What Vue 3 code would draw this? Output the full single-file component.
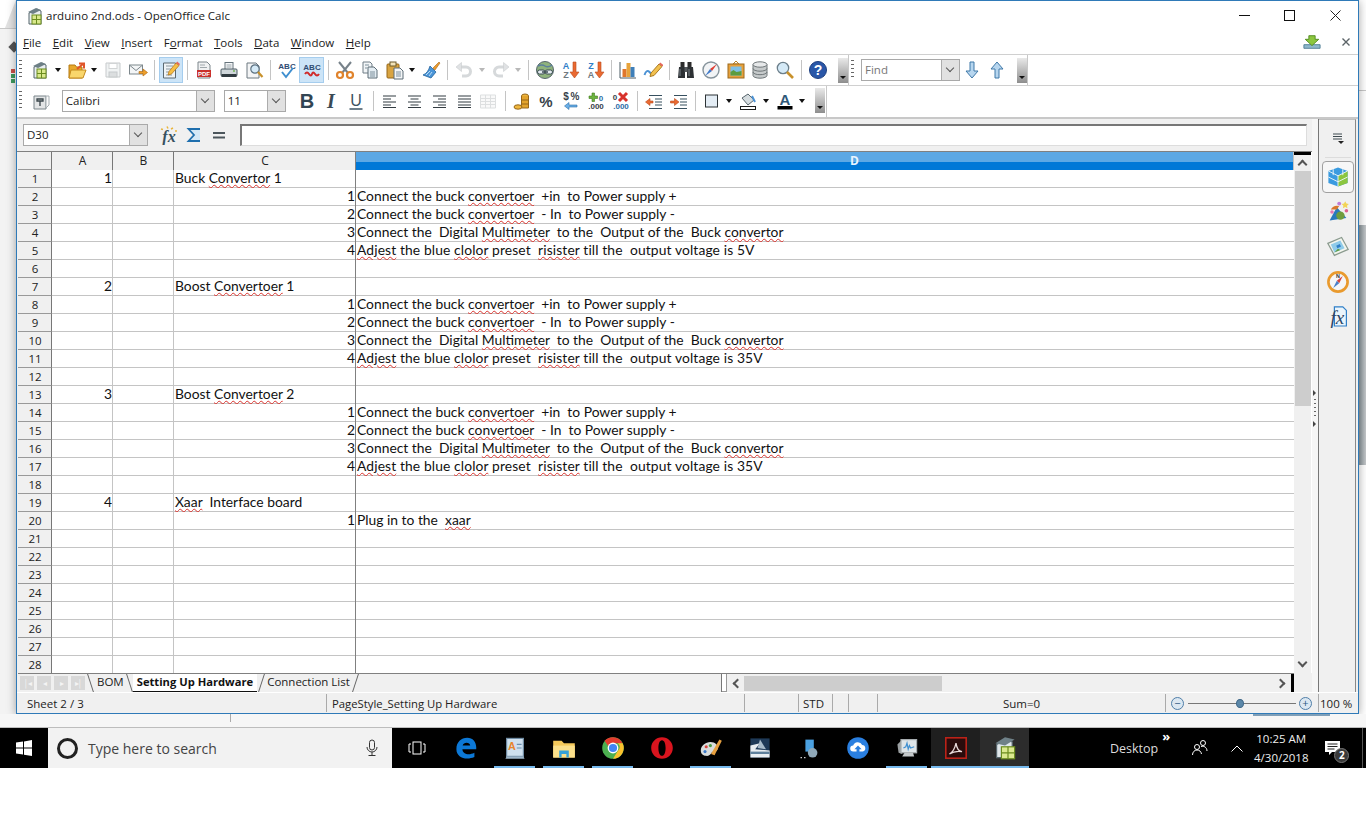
<script setup>
import { computed } from 'vue'

// all toolbar and taskbar pictures, drawn on a 20x20 box
const icons = {
  calc: '<path d="M4 7 12 3l4 2v13H4z" fill="#e9eef0" stroke="#55656b"/><path d="M3 6 11 2l5 2-8 4z" fill="#6d7f86"/><rect x="7" y="9" width="9" height="9" fill="#d9e88c" stroke="#6b8c1e"/><path d="M11.5 9v9M7 13.5h9" stroke="#6b8c1e"/>',
  open: '<path d="M2 5h6l1.500 2H15v11H2z" fill="#e8a92c" stroke="#b57a12"/><path d="M4 10h15l-3 8H2z" fill="#f9d66c" stroke="#c4891c"/><path d="M10 9l6-5M12 3.500h5v5" fill="none" stroke="#e0552a" stroke-width="2"/>',
  save: '<path d="M3 3h14v14H3z" fill="#eceff0" stroke="#b4b9bb"/><rect x="6" y="3.500" width="8" height="5" fill="#fff" stroke="#c2c6c8"/><rect x="6" y="12" width="8" height="5" fill="#cfd3d5" stroke="#b4b9bb"/>',
  mail: '<rect x="1.500" y="5" width="13" height="9" fill="#f4f6f7" stroke="#7d878c"/><path d="M2 5.500l6 5 6-5" fill="none" stroke="#7d878c"/><path d="M11 11.500h4V9l4.500 3.500L15 16v-2.500h-4z" fill="#eda02c" stroke="#b8711a" stroke-width=".7"/>',
  edit: '<path d="M2.500 3h12v15h-12z" fill="#eef3f6" stroke="#5c6a72"/><path d="M5 6h7M5 9h5M5 12h4M5 15h6" stroke="#8b98a0"/><path d="M7 15l1-3.500L15 3l3 2.500-7.500 8.500z" fill="#f6bf45" stroke="#b7791c" stroke-width=".8"/><path d="M15 3l1.200-1.400 2.800 2.400L18 5.500z" fill="#e4685c"/>',
  pdf: '<path d="M4 2h9l3 3v13H4z" fill="#f0f1f2" stroke="#7c868b"/><path d="M6 5h5M6 7.500h7" stroke="#a0a8ac"/><rect x="3" y="10" width="14" height="7" fill="#c9302c"/><text x="10" y="16" font-family="Liberation Sans" font-size="6" font-weight="700" text-anchor="middle" fill="#fff">PDF</text>',
  print: '<rect x="6" y="2.500" width="8" height="7" fill="#f7f8f9" stroke="#66747c"/><path d="M7.500 5h5M7.500 7h5" stroke="#99a5ab"/><rect x="2" y="9" width="16" height="7" rx="1" fill="#cfd6da" stroke="#4b5a62"/><rect x="2.500" y="14" width="15" height="3" fill="#303a40"/><circle cx="15" cy="11" r=".9" fill="#6bb04a"/>',
  preview: '<path d="M3 3h9l3 3v12H3z" fill="#f4f5f6" stroke="#6c7880"/><circle cx="11" cy="9" r="4.200" fill="#d5eaf7" stroke="#5c7180" stroke-width="1.200"/><path d="M14 12l4.500 5" stroke="#c8912b" stroke-width="2.200"/>',
  spell: '<text x="10" y="9" font-family="Liberation Sans" font-size="8" font-weight="700" text-anchor="middle" fill="#2f4c72">ABC</text><path d="M5 12l4 5 7-9" fill="none" stroke="#3f8fd0" stroke-width="2"/>',
  autospell: '<text x="10" y="10" font-family="Liberation Sans" font-size="8" font-weight="700" text-anchor="middle" fill="#2f4c72">ABC</text><path d="M3 14q2-3 4 0t3 0 3 0 4 0" fill="none" stroke="#d02b2b" stroke-width="2"/>',
  cut: '<path d="M4 2l9 11M16 2L7 13" stroke="#77828a" stroke-width="2"/><circle cx="5" cy="15" r="3" fill="none" stroke="#e0832c" stroke-width="2.200"/><circle cx="15" cy="15" r="3" fill="none" stroke="#e0832c" stroke-width="2.200"/>',
  copy: '<path d="M3 2h7l2 2v9H3z" fill="#f2f5f7" stroke="#6f7d86"/><path d="M8 7h6l3 3v8H8z" fill="#e4edf3" stroke="#5c6c76"/><path d="M5 5h4M5 8h2M10 12h5M10 14h5M10 16h5" stroke="#7d8f9b"/>',
  paste: '<rect x="2" y="4" width="12" height="14" rx="1" fill="#d9a441" stroke="#96671b"/><rect x="5" y="2" width="6" height="4" fill="#f3e3b8" stroke="#6c5a2b"/><path d="M9 8h6l3 3v8H9z" fill="#f4f6f7" stroke="#5c6c76"/><path d="M11 12h5M11 14h5M11 16h5" stroke="#7d8f9b"/>',
  brush: '<path d="M12 8l6-6 1 1-5 7z" fill="#e99b2f" stroke="#a9681a" stroke-width=".6"/><path d="M9 6l6 6-5 6-8-3q5-2 7-9z" fill="#4a95d8" stroke="#24639c" stroke-width=".8"/><path d="M5 15l4-4M8 16l3-4" stroke="#bcdcf5"/>',
  undo: '<path d="M6 7h6a4.500 4.500 0 0 1 0 9H8" fill="none" stroke="#c9cdcf" stroke-width="3"/><path d="M7.500 2.500v9L2 7z" fill="#d6d9db" stroke="#b8bcbf" stroke-width=".6"/>',
  redo: '<path d="M14 7H8a4.500 4.500 0 0 0 0 9h4" fill="none" stroke="#c9cdcf" stroke-width="3"/><path d="M12.500 2.500v9L18 7z" fill="#d6d9db" stroke="#b8bcbf" stroke-width=".6"/>',
  globe: '<circle cx="10" cy="10" r="8.500" fill="#8fb37c" stroke="#56666c"/><path d="M3 6q4-2 7 0t7-1" stroke="#5b7f9c" fill="none" stroke-width="1.500"/><rect x="2.500" y="10" width="7.500" height="4" rx="2" fill="#e4ecf0" stroke="#3d4d55"/><rect x="10" y="10" width="7.500" height="4" rx="2" fill="#e4ecf0" stroke="#3d4d55"/><path d="M7 12h6" stroke="#3d4d55" stroke-width="1.500"/>',
  sortaz: '<text x="6" y="9" font-family="Liberation Sans" font-size="9" font-weight="700" text-anchor="middle" fill="#2f7fc8">A</text><text x="6" y="18" font-family="Liberation Sans" font-size="9" font-weight="700" text-anchor="middle" fill="#6f7a80">Z</text><path d="M13 2h3v10h3l-4.500 6L10 12h3z" fill="#ea6a32" stroke="#b94a1b" stroke-width=".6"/>',
  sortza: '<text x="6" y="9" font-family="Liberation Sans" font-size="9" font-weight="700" text-anchor="middle" fill="#2f7fc8">Z</text><text x="6" y="18" font-family="Liberation Sans" font-size="9" font-weight="700" text-anchor="middle" fill="#6f7a80">A</text><path d="M13 2h3v10h3l-4.500 6L10 12h3z" fill="#ea6a32" stroke="#b94a1b" stroke-width=".6"/>',
  chart: '<path d="M2 2v16h16" fill="none" stroke="#4b5a62"/><rect x="4.500" y="9" width="4" height="8" fill="#e0762b"/><rect x="8.500" y="3" width="4" height="14" fill="#e8a33a"/><rect x="12.500" y="7" width="4" height="10" fill="#3e7fb9"/>',
  draw: '<path d="M1.500 15q2-6 5-3t3 4" fill="none" stroke="#4c92d4" stroke-width="2"/><path d="M8 13 16 4l3 2.500-8 9-4 1z" fill="#f2c04e" stroke="#a97b22"/><path d="M16 4l1.300-1.500 3 2.500L19 6.500z" fill="#e4685c"/>',
  binoc: '<rect x="4.500" y="2" width="4" height="5" fill="#2c2c2c"/><rect x="11.500" y="2" width="4" height="5" fill="#2c2c2c"/><path d="M3 7h6v11H2zM11 7h6l1 11h-7z" fill="#2d3134"/><rect x="8.500" y="7" width="3" height="5" fill="#54595c"/><path d="M4 9v7M13 9v7" stroke="#7c858a"/>',
  compass: '<circle cx="10" cy="10" r="8" fill="#f2f4f6" stroke="#87949c" stroke-width="1.400"/><path d="M16 4 9 9l2 2z" fill="#df3c32"/><path d="M4 16l5-7 2 2z" fill="#3f79c8"/>',
  gallery: '<path d="M10 1l3 3H7z" fill="none" stroke="#b5812a"/><rect x="2" y="4" width="16" height="14" fill="#e7a13c" stroke="#9d6b1c"/><rect x="4.500" y="6.500" width="11" height="9" fill="#7fc0e6"/><path d="M4.500 15.500V12l3-2 3 2 5-1v4.500z" fill="#5c9c3f"/>',
  db: '<path d="M3 4.500v11a7 2.700 0 0 0 14 0v-11z" fill="#c6cacb" stroke="#6f7679"/><ellipse cx="10" cy="4.500" rx="7" ry="2.700" fill="#e6e8e9" stroke="#6f7679"/><path d="M3 8.500a7 2.700 0 0 0 14 0M3 12a7 2.700 0 0 0 14 0" fill="none" stroke="#6f7679"/>',
  zoom: '<circle cx="8" cy="8" r="5.700" fill="#d5eaf7" stroke="#6c7f8b" stroke-width="1.300"/><path d="M12 12l6 6" stroke="#c8912b" stroke-width="2.600"/>',
  help: '<circle cx="10" cy="10" r="8.500" fill="#2a57a8" stroke="#1d3f80"/><text x="10" y="15" font-family="Liberation Sans" font-size="14" font-weight="700" text-anchor="middle" fill="#fff">?</text>',
  styles: '<path d="M3 5h12v13H3z" fill="#e3e5e6" stroke="#7b858a"/><path d="M15 5h3v9l-3 3z" fill="#fafafa" stroke="#a5adb1"/><path d="M6 8h6v2H6zM9 10v5" fill="none" stroke="#39444a" stroke-width="1.300"/>',
  bold: '<text x="10" y="17" font-family="Liberation Sans" font-size="20" font-weight="700" text-anchor="middle" fill="#324553">B</text>',
  italic: '<text x="10" y="17" font-family="Liberation Serif" font-size="20" font-weight="700" font-style="italic" text-anchor="middle" fill="#3b4a55">I</text>',
  under: '<text x="10" y="15" font-family="Liberation Sans" font-size="16" text-anchor="middle" fill="#3d5363">U</text><path d="M3.500 18h13" stroke="#3d5363" stroke-width="1.500"/>',
  left: '<path d="M4 5h13M4 8h8M4 11h13M4 14h8" stroke="#333c42" stroke-width="1.200"/><path d="M4 16.500h13" stroke="#333c42"/>',
  center: '<path d="M4 5h13M6.500 8h8M4 11h13M6.500 14h8M4 16.500h13" stroke="#333c42" stroke-width="1.200"/>',
  right: '<path d="M4 5h13M9 8h8M4 11h13M9 14h8M4 16.500h13" stroke="#333c42" stroke-width="1.200"/>',
  just: '<path d="M4 5h13M4 8h13M4 11h13M4 14h13M4 16.500h13" stroke="#333c42" stroke-width="1.200"/>',
  table: '<path d="M2.500 4h15v13h-15zM2.500 7.500h15M2.500 10.500h15M2.500 13.500h15M7.500 4v13M12.500 4v13" fill="#f8f8f8" stroke="#d2d5d6"/>',
  coins: '<ellipse cx="13" cy="5" rx="3.500" ry="2" fill="#efb73e" stroke="#96671b"/><path d="M9.500 5v12h7V5" fill="#e3a42d" stroke="#96671b"/><path d="M9.500 9h7M9.500 13h7" stroke="#96671b"/><ellipse cx="6" cy="16" rx="4" ry="2.200" fill="#efb73e" stroke="#96671b"/>',
  percent: '<text x="10" y="16" font-family="Liberation Sans" font-size="15" font-weight="700" text-anchor="middle" fill="#37424a">%</text>',
  convert: '<text x="5" y="9" font-family="Liberation Sans" font-size="10" font-weight="700" text-anchor="middle" fill="#37424a">$</text><text x="14" y="9" font-family="Liberation Sans" font-size="10" font-weight="700" text-anchor="middle" fill="#37424a">%</text><path d="M16 14H8v-2.500L3.500 15 8 18.500V16h8z" fill="#6aaee6" stroke="#2d6ea8" stroke-width=".6"/>',
  adddec: '<path d="M3 5h3V2h2.500v3h3v2.500h-3v3H6v-3H3z" fill="#6cb33f" stroke="#3f7a1c" stroke-width=".6"/><text x="15" y="10" font-family="Liberation Sans" font-size="8" font-weight="700" text-anchor="middle" fill="#2d6ea8">0</text><text x="10" y="18" font-family="Liberation Sans" font-size="8" font-weight="700" text-anchor="middle" fill="#37424a">.000</text>',
  deldec: '<text x="4" y="9" font-family="Liberation Sans" font-size="8" font-weight="700" text-anchor="middle" fill="#37424a">0</text><path d="M8 2l8 8M16 2l-8 8" stroke="#d8322c" stroke-width="3"/><text x="10" y="18" font-family="Liberation Sans" font-size="8" font-weight="700" text-anchor="middle" fill="#2d6ea8">.000</text>',
  indent: '<path d="M9 10H6V7.500L1.500 11 6 14.500V12h3z" fill="#ea6a32" stroke="#b94a1b" stroke-width=".6"/><path d="M5 4.500h13M11 8h7M11 11h7M11 14h7M5 17.500h13" stroke="#37505f" stroke-width="1.200"/>',
  outdent: '<path d="M1.500 10h4V7.500L10 11l-4.500 3.500V12h-4z" fill="#ea6a32" stroke="#b94a1b" stroke-width=".6"/><path d="M5 4.500h13M11 8h7M11 11h7M11 14h7M5 17.500h13" stroke="#37505f" stroke-width="1.200"/>',
  border: '<rect x="3.500" y="4" width="12" height="12" fill="#e4edf5" stroke="#2d3336"/>',
  bucket: '<path d="M4 7l6-4 6 6-6 5z" fill="#d5dcdf" stroke="#58666d"/><path d="M14 5l3 6" stroke="#4c92d4" stroke-width="2"/><rect x="2.500" y="15.500" width="15" height="3" fill="#fff" stroke="#1c1c1c"/>',
  fontcolor: '<text x="10" y="14" font-family="Liberation Sans" font-size="15" font-weight="700" text-anchor="middle" fill="#2f5878">A</text><rect x="2.500" y="15" width="15" height="3.500" fill="#000"/>',
  finddown: '<path d="M8 2h4v9h4l-6 7-6-7h4z" fill="#b7d6ef" stroke="#3f78a8"/>',
  findup: '<path d="M8 18h4V9h4l-6-7-6 7h4z" fill="#b7d6ef" stroke="#3f78a8"/>',
  fxstar: '<text x="10" y="17" font-family="Liberation Serif" font-size="16" font-style="italic" font-weight="700" text-anchor="middle" fill="#36505f">fx</text><path d="M2 4l2 .500M8 1.500l1 2M14 3l-2 1M18 6h-2" stroke="#e9b53c" stroke-width="1.500"/>',
  sigma: '<path d="M16 4H4.500l5.500 6-5.500 6H16" fill="#d4e8f6" stroke="#1f6fae" stroke-width="1.800"/>',
  equals: '<path d="M4 8h12M4 12.500h12" stroke="#4c565c" stroke-width="2"/>',
  cube: '<path d="M2 5l8-3 8 3v10l-8 3-8-3z" fill="#3a9be0"/><path d="M10 9l8-4v10l-8 3z" fill="#8cc63f"/><path d="M2 5l8 4 8-4M10 9v9M6 3.500v5M14 3.500v5M2 10l8 4 8-4" fill="none" stroke="#e8f3f8" stroke-width=".8"/>',
  shapes: '<path d="M3 17 9 6l8 9z" fill="#2879bd"/><circle cx="12" cy="13" r="3.500" fill="#6f9c3e"/><path d="M4 8q2-4 7-3l-2 3z" fill="#d9772b"/><circle cx="5" cy="10" r="1.500" fill="#e478b4"/><circle cx="11" cy="3" r="1.600" fill="#c07ad6"/><circle cx="17" cy="9" r="1.500" fill="#e0608f"/><path d="M16 1l1 2 2 .300-1.500 1.500.400 2-1.900-1-1.900 1 .400-2L13 3.300l2-.300z" fill="#f2d356"/>',
  image: '<path d="M1.500 7 13 2l5.500 10L7 17z" fill="#f3f5ee" stroke="#8a9a8e"/><path d="M4 8l8-3.500 3.500 6.500L7 14.500z" fill="#8fcbe9"/><path d="M7 14.500l3-3 2 1 3.500-1.500z" fill="#5e9d3c"/><path d="M8.500 9l3-1.500 1 2-3 1.500z" fill="#2f7fc8"/>',
  navigator: '<circle cx="10" cy="10" r="8" fill="#f5f6f8" stroke="#e99a2e" stroke-width="2.200"/><path d="M14 5 9 9l2 2z" fill="#d8453c"/><path d="M6 15l3-6 2 2z" fill="#4a80c8"/><text x="10" y="6.500" font-family="Liberation Sans" font-size="4.500" font-weight="700" text-anchor="middle" fill="#333">N</text>',
  fxdoc: '<path d="M7 1.500h7l3 3v13H7z" fill="#eaf4fb" stroke="#2f7fc8"/><text x="9.500" y="15.500" font-family="Liberation Serif" font-size="16" font-style="italic" text-anchor="middle" fill="#2b4666">fx</text>',
  menu: '<path d="M5 5h9M5 7.500h9M5 10h9" stroke="#3e4a50"/><path d="M10 12h6l-3 3z" fill="#222"/>',
  update: '<path d="M1 13h18v4H1z" fill="#8fb8cc" stroke="#4e7d94"/><path d="M6.500 3h7v4h4L10 14 2.500 7h4z" fill="#8cc63f" stroke="#4f8a1c"/>',
  close: '<path d="M5 5l10 10M15 5 5 15" stroke="#5c6468" stroke-width="2"/>',
  windows: '<path d="M2 4.500 9 3.500v6H2zM10 3.400 18 2v7.500h-8zM2 10.500h7v6l-7-1zM10 10.500h8V18l-8-1.300z" fill="#fff"/>',
  mic: '<rect x="7.500" y="2" width="5" height="10" rx="2.500" fill="none" stroke="#333"/><path d="M5 9a5 5 0 0 0 10 0M10 14v3M6.500 17.500h7" fill="none" stroke="#333"/>',
  taskview: '<rect x="6" y="4" width="8" height="12" fill="none" stroke="#fff"/><path d="M4 6H2v8h2M16 6h2v8h-2" fill="none" stroke="#fff"/>',
  edge: '<path d="M2 11C2 5 6 1.500 11 1.500c5 0 8 4 7.500 9.500H7c.3 4 5 5.500 10 3v3.500c-7 3-15 .5-15-6.500zM7.200 8h6.300c0-3-5.500-3.500-6.300 0z" fill="#0c78d6"/>',
  wordpad: '<rect x="3" y="2" width="14" height="15" fill="#cfe0ee" stroke="#6f8ba3"/><text x="7.500" y="12" font-family="Liberation Sans" font-size="9" font-weight="700" text-anchor="middle" fill="#e8842c">A</text><path d="M11.500 7h4M11.500 10h4" stroke="#6b8fb0"/><path d="M3 17h14l1 2H2z" fill="#9fb7cb"/>',
  folder: '<path d="M1 4h7l2 2h9v12H1z" fill="#f5c95a"/><path d="M1 8h18v10H1z" fill="#fbe08b"/><path d="M6 12h8v6h-2v-3H8v3H6z" fill="#34a1d8"/>',
  chrome: '<circle cx="10" cy="10" r="9" fill="#4caf50"/><path d="M10 1a9 9 0 0 1 8 5H10a4 4 0 0 0-3.800 2.700L3 4a9 9 0 0 1 7-3z" fill="#e33b2e"/><path d="M18 6a9 9 0 0 1-8 13l4-6.500A4 4 0 0 0 14 6z" fill="#fbc02d"/><circle cx="10" cy="10" r="4.500" fill="#fff"/><circle cx="10" cy="10" r="3.400" fill="#4285f4"/>',
  opera: '<path fill-rule="evenodd" d="M10 1c-5 0-9 4-9 9s4 9 9 9 9-4 9-9-4-9-9-9zm0 2.500c2 0 3 3 3 6.500s-1 6.500-3 6.500S7 13.500 7 10s1-6.500 3-6.500z" fill="#d9141e"/>',
  paint: '<path d="M1.500 12c0-4 4-7 8-7s7 3 6 6-4 1-5 3-3 3-5 2.500-4-1.500-4-4.500z" fill="#d8dcdc"/><circle cx="6" cy="9" r="1.300" fill="#d8453c"/><circle cx="9.500" cy="8" r="1.300" fill="#4a9c3f"/><circle cx="5" cy="13" r="1.300" fill="#3a78c8"/><path d="M10 15 17 3l2 1-6 12z" fill="#e6a040"/>',
  ship: '<rect x="2" y="2" width="16" height="16" fill="#1f3a58"/><path d="M2 8l8-2-4 5 12 1v6H2z" fill="#e8edf1"/><path d="M10 3l5 8-7-1z" fill="#a9bccb"/><path d="M2 13h16v2H2z" fill="#5d7f9b"/>',
  net: '<rect x="7" y="3" width="7" height="10" fill="#4aa0e0"/><circle cx="13" cy="14" r="4" fill="#8fa8b8"/><path d="M3 18h1M6 18h1" stroke="#fff"/>',
  cloud: '<circle cx="10" cy="10" r="9" fill="#2a7fe0"/><path d="M6 13a2.500 2.500 0 0 1 0-5 4 4 0 0 1 7.500-.5A2.800 2.800 0 0 1 14 13h-2.800v-2H13l-3-3-3 3h1.800v2z" fill="#fff"/>',
  monitor: '<path d="M2 7l3-3 1 11-3-1z" fill="#9a9fa1"/><rect x="5" y="3" width="13" height="11" fill="#dfe5e8" stroke="#a6acaf"/><path d="M7 10l2-1 1-3 1 5 1-3 1 2 3-1" fill="none" stroke="#3f8fd0"/><path d="M8 14h7l1 3H6z" fill="#c4c9cb"/>',
  acrobat: '<rect x="1.500" y="1.500" width="17" height="17" fill="#2a0c0c" stroke="#bf2319" stroke-width="1.300"/><path d="M4.500 15q4-2 5.500-9 1 7 5 7-6-1-10.500 2z" fill="none" stroke="#e8dada" stroke-width="1.100"/>',
  calcbig: '<path d="M3 7 11 3l5 2v13H3z" fill="#dfe7ea" stroke="#58676e"/><path d="M2 6 10 1l8 2-8 5z" fill="#6f8188"/><rect x="7" y="9" width="11" height="10" fill="#dbe98f" stroke="#6b8c1e"/><path d="M12.500 9v10M7 14h11" stroke="#6b8c1e"/>',
  people: '<circle cx="7" cy="9" r="2.500" fill="none" stroke="#fff"/><path d="M2.500 17c0-3 2-5 4.500-5s4 1.500 4.500 4" fill="none" stroke="#fff"/><circle cx="13" cy="5" r="2.500" fill="none" stroke="#fff"/><path d="M11 8.500c3-1 6 1 6 4.500" fill="none" stroke="#fff"/>',
  notify: '<path d="M2 3h15v11H9l-3 3v-3H2z" fill="#fff"/><path d="M4.500 6h10M4.500 8.500h10M4.500 11h7" stroke="#222"/>'
}

const row1 = [
  { i: 'calc' }, { d: 1 }, { i: 'open' }, { d: 1 }, { i: 'save' }, { i: 'mail' }, { s: 1 },
  { i: 'edit', on: 1 }, { s: 1 }, { i: 'pdf' }, { i: 'print' }, { i: 'preview' }, { s: 1 },
  { i: 'spell' }, { i: 'autospell', on: 1 }, { s: 1 }, { i: 'cut' }, { i: 'copy' }, { i: 'paste' }, { d: 1 }, { i: 'brush' }, { s: 1 },
  { i: 'undo' }, { d: 2 }, { i: 'redo' }, { d: 2 }, { s: 1 },
  { i: 'globe' }, { i: 'sortaz' }, { i: 'sortza' }, { s: 1 }, { i: 'chart' }, { i: 'draw' }, { s: 1 },
  { i: 'binoc' }, { i: 'compass' }, { i: 'gallery' }, { i: 'db' }, { i: 'zoom' }, { s: 1 }, { i: 'help' }
]
const row2a = [{ i: 'bold' }, { i: 'italic' }, { i: 'under' }, { s: 1 }, { i: 'left' }, { i: 'center' }, { i: 'right' }, { i: 'just' }, { i: 'table' }, { s: 1 },
  { i: 'coins' }, { i: 'percent' }, { i: 'convert' }, { i: 'adddec' }, { i: 'deldec' }, { s: 1 }, { i: 'indent' }, { i: 'outdent' }, { s: 1 },
  { i: 'border' }, { d: 1 }, { i: 'bucket' }, { d: 1 }, { i: 'fontcolor' }, { d: 1 }]

const menus = [
  ['', 'F', 'ile'], ['', 'E', 'dit'], ['', 'V', 'iew'], ['', 'I', 'nsert'], ['F', 'o', 'rmat'],
  ['', 'T', 'ools'], ['', 'D', 'ata'], ['', 'W', 'indow'], ['', 'H', 'elp']
]

const steps = (v) => [
  'Connect the buck [convertoer]  +in  to Power supply +',
  'Connect the buck [convertoer]  - In  to Power supply -',
  'Connect the  Digital [Multimeter]  to the  Output of the  Buck [convertor]',
  `[Adjest] the blue [clolor] preset  [risister] till the  output voltage is ${v}`
]
const s5 = steps('5V')
const s35 = steps('35V')

const filled = {
  1: { a: 1, c: 'Buck [Convertor] 1' },
  2: { n: 1, d: s5[0] }, 3: { n: 2, d: s5[1] }, 4: { n: 3, d: s5[2] }, 5: { n: 4, d: s5[3] },
  7: { a: 2, c: 'Boost [Convertoer] 1' },
  8: { n: 1, d: s35[0] }, 9: { n: 2, d: s35[1] }, 10: { n: 3, d: s35[2] }, 11: { n: 4, d: s35[3] },
  13: { a: 3, c: 'Boost [Convertoer] 2' },
  14: { n: 1, d: s35[0] }, 15: { n: 2, d: s35[1] }, 16: { n: 3, d: s35[2] }, 17: { n: 4, d: s35[3] },
  19: { a: 4, c: '[Xaar]  Interface board' },
  20: { n: 1, d: 'Plug in to the  [xaar]' }
}

// words between [ ] get the red spelling squiggle
const parts = (text) => (text || '').split(/(\[[^\]]+\])/).filter(Boolean).map((p) =>
  p[0] === '[' ? { t: p.slice(1, -1), bad: true } : { t: p, bad: false })

const rows = computed(() => Array.from({ length: 28 }, (_, k) => {
  const r = filled[k + 1] || {}
  // the Adjest lines run a little wider in Calibri than in Lato
  return { no: k + 1, a: r.a, n: r.n, c: parts(r.c), d: parts(r.d), loose: /^\[Adjest/.test(r.d || '') }
}))

const sideIcons = ['shapes', 'image', 'navigator', 'fxdoc']
const dockIcons = [
  { i: 'wordpad', on: 1 }, { i: 'folder', on: 1 }, { i: 'chrome', on: 1 }, { i: 'opera' }, { i: 'paint', on: 1 },
  { i: 'ship' }, { i: 'net' }, { i: 'cloud' }, { i: 'monitor', on: 1 }
]
</script>

<template>
  <div class="screen">
    <div class="desk-top"></div>
    <div class="desk-left">
      <span class="desk-chev"></span>
      <i class="dot red"></i><i class="dot green"></i><i class="dot green"></i>
    </div>
    <div class="desk-line"></div>
    <div class="desk-right"></div>

    <div class="window">
      <div class="titlebar">
        <svg class="ico" viewBox="0 0 20 20" v-html="icons.calc"></svg>
        <span class="title">arduino 2nd.ods - OpenOffice Calc</span>
        <span class="wbtns">
          <i class="w-min"></i>
          <i class="w-max"></i>
          <svg class="w-x" viewBox="0 0 11 11"><path d="M.5.5l10 10M10.500.5l-10 10" stroke="#222" fill="none" /></svg>
        </span>
      </div>

      <div class="menubar">
        <span v-for="m in menus" :key="m[2]" class="menu">{{ m[0] }}<u>{{ m[1] }}</u>{{ m[2] }}</span>
        <svg class="ico menu-update" viewBox="0 0 20 20" v-html="icons.update"></svg>
        <svg class="ico menu-close" viewBox="0 0 20 20" v-html="icons.close"></svg>
      </div>

      <div class="toolrow first">
        <div class="toolbar tb-one">
          <span class="grip"></span>
          <template v-for="(it, k) in row1" :key="k">
            <span v-if="it.s" class="sep"></span>
            <span v-else-if="it.d" class="drop" :class="{ faint: it.d === 2 }"></span>
            <span v-else class="tool" :class="{ on: it.on, off: ['save', 'undo', 'redo'].includes(it.i) }">
              <svg class="ico" viewBox="0 0 20 20" v-html="icons[it.i]"></svg>
            </span>
          </template>
          <span class="more"></span>
        </div>
        <div class="toolbar tb-find">
          <span class="grip"></span>
          <div class="combo find"><span class="combo-text grey">Find</span><span class="combo-btn"></span></div>
          <span class="tool"><svg class="ico" viewBox="0 0 20 20" v-html="icons.finddown"></svg></span>
          <span class="tool"><svg class="ico" viewBox="0 0 20 20" v-html="icons.findup"></svg></span>
          <span class="more"></span>
        </div>
      </div>

      <div class="toolrow second">
        <div class="toolbar tb-two">
          <span class="grip"></span>
          <span class="tool"><svg class="ico" viewBox="0 0 20 20" v-html="icons.styles"></svg></span>
          <div class="combo font"><span class="combo-text">Calibri</span><span class="combo-btn"></span></div>
          <div class="combo size"><span class="combo-text">11</span><span class="combo-btn"></span></div>
          <span class="two-gap"></span>
          <template v-for="(it, k) in row2a" :key="k">
            <span v-if="it.s" class="sep"></span>
            <span v-else-if="it.d" class="drop"></span>
            <span v-else class="tool" :class="{ off: it.i === 'table' }">
              <svg class="ico" viewBox="0 0 20 20" v-html="icons[it.i]"></svg>
            </span>
          </template>
          <span class="more"></span>
        </div>
      </div>

      <div class="work">
        <div class="main">
          <div class="formula">
            <div class="combo name"><span class="combo-text">D30</span><span class="combo-btn"></span></div>
            <span class="tool f"><svg class="ico" viewBox="0 0 20 20" v-html="icons.fxstar"></svg></span>
            <span class="tool f"><svg class="ico" viewBox="0 0 20 20" v-html="icons.sigma"></svg></span>
            <span class="tool f"><svg class="ico" viewBox="0 0 20 20" v-html="icons.equals"></svg></span>
            <div class="formula-input"></div>
          </div>

          <div class="sheet">
            <div class="grid">
              <div class="line head">
                <span class="cell rh"></span>
                <span class="cell ch">A</span>
                <span class="cell ch">B</span>
                <span class="cell ch last">C</span>
                <span class="cell ch-d">D</span>
              </div>
              <div v-for="r in rows" :key="r.no" class="line">
                <span class="cell rh">{{ r.no }}</span>
                <span class="cell num">{{ r.a }}</span>
                <span class="cell"></span>
                <span class="cell last" :class="{ num: r.n }">
                  <template v-if="r.n">{{ r.n }}</template>
                  <template v-for="(p, k) in r.c" :key="k"><span :class="{ bad: p.bad }">{{ p.t }}</span></template>
                </span>
                <span class="cell wide" :class="{ loose: r.loose }">
                  <template v-for="(p, k) in r.d" :key="k"><span :class="{ bad: p.bad }">{{ p.t }}</span></template>
                </span>
              </div>
            </div>
            <div class="vscroll">
              <span class="cap"></span>
              <span class="v-up"></span>
              <span class="v-thumb"></span>
              <span class="v-down"></span>
            </div>
          </div>

          <div class="tabbar">
            <div class="tab-nav">
              <span class="nav">&#9474;&#9666;</span>
              <span class="nav">&#9666;</span>
              <span class="nav">&#9656;</span>
              <span class="nav">&#9656;&#9474;</span>
            </div>
            <span class="tab back">BOM</span>
            <span class="tab active">Setting Up Hardware</span>
            <span class="tab fwd">Connection List</span>
            <span class="tab-fill"></span>
            <span class="split"></span>
            <div class="hscroll">
              <span class="h-left"></span>
              <span class="h-thumb"></span>
              <span class="h-right"></span>
            </div>
            <span class="blackbar"></span>
          </div>
        </div>

        <div class="deck-split"><i></i><b></b><i class="down"></i></div>
        <div class="deck">
          <svg class="ico deck-menu" viewBox="0 0 20 20" v-html="icons.menu"></svg>
          <span class="deck-rule"></span>
          <span class="deck-tab on"><svg class="ico big" viewBox="0 0 20 20" v-html="icons.cube"></svg></span>
          <span v-for="s in sideIcons" :key="s" class="deck-tab"><svg class="ico big" viewBox="0 0 20 20" v-html="icons[s]"></svg></span>
        </div>
      </div>

      <div class="status">
        <span class="st s-sheet">Sheet 2 / 3</span>
        <span class="st s-page">PageStyle_Setting Up Hardware</span>
        <span class="st s-a"></span>
        <span class="st s-std">STD</span>
        <span class="st s-b"></span>
        <span class="st s-c"></span>
        <span class="st s-sum">Sum=0</span>
        <span class="st s-zoom">
          <i class="z-btn">&minus;</i>
          <i class="z-track"><b></b></i>
          <i class="z-btn">+</i>
        </span>
        <span class="st s-pct">100 %</span>
      </div>
    </div>

    <div class="strip"><i class="strip-a"></i><i class="strip-b"></i></div>

    <div class="taskbar">
      <span class="start"><svg class="ico" viewBox="0 0 20 20" v-html="icons.windows"></svg></span>
      <div class="search">
        <span class="cortana"></span>
        <span class="search-text">Type here to search</span>
        <svg class="ico search-mic" viewBox="0 0 20 20" v-html="icons.mic"></svg>
      </div>
      <span class="dock tv"><svg class="ico" viewBox="0 0 20 20" v-html="icons.taskview"></svg></span>
      <span class="dock"><svg class="ico tb" viewBox="0 0 20 20" v-html="icons.edge"></svg></span>
      <span v-for="d in dockIcons" :key="d.i" class="dock" :class="{ run: d.on }">
        <svg class="ico tb" viewBox="0 0 20 20" v-html="icons[d.i]"></svg>
      </span>
      <span class="dock run pdfapp"><svg class="ico tb" viewBox="0 0 20 20" v-html="icons.acrobat"></svg></span>
      <span class="dock run calcapp"><svg class="ico tb" viewBox="0 0 20 20" v-html="icons.calcbig"></svg></span>
      <span class="desk-label">Desktop</span>
      <span class="chevs">&raquo;</span>
      <svg class="ico people" viewBox="0 0 20 20" v-html="icons.people"></svg>
      <svg class="caret" viewBox="0 0 12 7"><path d="M.5 6.500l5.500-5.500 5.500 5.500" fill="none" stroke="#fff" /></svg>
      <div class="clock"><span>10:25 AM</span><span>4/30/2018</span></div>
      <span class="notify">
        <svg class="ico" viewBox="0 0 20 20" v-html="icons.notify"></svg>
        <b>2</b>
      </span>
      <span class="show-desk"></span>
    </div>
  </div>
</template>

<style>
html, body { margin: 0; background: #fff; overflow: hidden; }
</style>

<style scoped>
.screen {
  position: relative;
  width: 1366px;
  height: 830px;
  overflow: hidden;
  background: #fff;
  font-family: "Open Sans", "Noto Sans", sans-serif;
  font-size: 11.5px;
  color: #222;
}
.ico { width: 20px; height: 20px; display: block; flex: none; }

/* what shows of the app behind the window */
.desk-top {
  position: absolute; left: 5px; top: 0; width: 11px; height: 28px;
  background: #e2e2e2; clip-path: polygon(100% 0, 100% 100%, 0 100%);
}
.desk-left {
  position: absolute; left: 0; top: 28px; width: 16px; height: 700px;
  background: #f3f3f3; border-top: 1px solid #c8c8c8;
}
.desk-chev {
  position: absolute; left: 10px; top: 14px; width: 8px; height: 8px;
  background: #555; transform: rotate(45deg);
}
.dot { position: absolute; left: 11px; width: 4px; height: 4px; }
.dot.red { top: 40px; background: #c9504a; }
.dot.green { top: 45px; background: #3f9a5f; }
.dot.green + .dot.green { top: 50px; }
.desk-line { position: absolute; left: 1359px; top: 90px; width: 7px; height: 1px; background: #c8c8c8; }
.desk-right {
  position: absolute; left: 1359px; top: 225px; width: 7px; height: 240px;
  background: linear-gradient(to right, #8f9aa0, #c5c8ca);
}

.window {
  position: relative;
  margin-left: 16px;
  width: 1343px;
  height: 714px;
  box-sizing: border-box;
  border: 1px solid #2f7ab8;
  background: #f0f0f0;
  box-shadow: 0 1px 9px rgba(0, 0, 0, 0.35);
  display: flex;
  flex-direction: column;
}

.titlebar {
  height: 29px;
  background: #fff;
  display: flex;
  align-items: center;
  padding-left: 8px;
  gap: 1px;
}
.title { font-size: 11.5px; color: #1a1a1a; }
.wbtns { margin-left: auto; display: flex; align-items: center; }
.w-min { width: 11px; height: 1px; background: #111; margin-right: 34px; }
.w-max { width: 9px; height: 9px; border: 1px solid #111; margin-right: 35px; }
.w-x { width: 11px; height: 11px; margin-right: 17px; }

.menubar {
  height: 24px;
  background: #fff;
  border-bottom: 1px solid #d0d0d0;
  display: flex;
  align-items: center;
  padding-left: 6px;
  gap: 11.5px;
}
.menu { font-size: 11.5px; color: #1a1a1a; }
.menu-update { margin-left: auto; margin-right: 7px; width: 18px; height: 18px; }
.menu-close { width: 14px; height: 14px; margin-right: 5px; }

.toolrow { display: flex; background: #fff; height: 30px; border-bottom: 1px solid #d0d0d0; }
.toolrow.second { height: 31px; border-bottom: 2px solid #c8c8c8; }
.toolbar { display: flex; align-items: center; height: 100%; box-sizing: border-box; }
.tb-one { width: 831px; padding-left: 2px; }
.tb-find { width: 180px; border-left: 1px solid #c8c8c8; border-right: 1px solid #c8c8c8; padding-left: 2px; }
.tb-two { width: 810px; padding: 0 1px 2px 2px; border-right: 1px solid #c8c8c8; }

.grip {
  width: 3px; height: 20px; margin-right: 6px; flex: none;
  background: repeating-linear-gradient(to bottom, #666 0 1px, transparent 1px 4px);
}
.tb-two .grip { margin-right: 7px; }
.tool {
  width: 24.75px; height: 26px; flex: none;
  display: flex; align-items: center; justify-content: center;
  box-sizing: border-box;
}
.tool.on { background: #cce4f7; border: 1px solid #a5cdee; }
.tool.off .ico { opacity: 0.75; }
.sep { width: 8.5px; height: 20px; flex: none; position: relative; }
.sep::after { content: ""; position: absolute; left: 4px; top: 0; width: 1px; height: 100%; background: #c4c4c4; }
.drop { width: 11.6px; flex: none; height: 10px; position: relative; }
.drop::after {
  content: ""; position: absolute; left: 2px; top: 3px;
  border: 3.5px solid transparent; border-top: 4px solid #111; border-bottom: 0;
}
.drop.faint::after { border-top-color: #b8b8b8; }
.more {
  width: 10px; height: 25px; margin-left: auto; flex: none; position: relative;
  background: linear-gradient(to bottom, #e9e9e9, #8e8e8e);
}
.more::after {
  content: ""; position: absolute; left: 2px; bottom: 4px;
  border: 3px solid transparent; border-top: 3px solid #111; border-bottom: 0;
}

.combo {
  display: flex; align-items: stretch; flex: none; box-sizing: border-box;
  height: 22px; border: 1px solid #a9a9a9; background: #fff;
}
.combo-text { flex: 1; padding-left: 3px; line-height: 20px; font-size: 11.5px; color: #222; }
.combo-text.grey { color: #777; }
.combo-btn {
  width: 17px; background: #e1e1e1; border-left: 1px solid #acacac; position: relative; flex: none;
}
.combo-btn::after {
  content: ""; position: absolute; left: 5px; top: 5px; width: 5px; height: 5px;
  border-right: 1px solid #555; border-bottom: 1px solid #555; transform: rotate(45deg);
}
.find { width: 99px; margin-left: 1px; }
.font { width: 153px; margin-left: 8px; }
.size { width: 62px; margin-left: 9px; }
.two-gap { width: 8.5px; flex: none; }

.work { flex: 1; display: flex; min-height: 0; }
.main { width: 1295px; display: flex; flex-direction: column; flex: none; }

.formula {
  height: 33px; display: flex; align-items: center; padding-left: 6px; flex: none;
  box-sizing: border-box; border-bottom: 1px solid #808080;
}
.name { width: 125px; margin-right: 8px; }
.f { width: 25px; }
.formula-input {
  width: 1067px; height: 22px; background: #fff; margin-left: 9px; box-sizing: border-box;
  border: 1px solid #ddd; border-top: 2px solid #777; border-left: 2px solid #777;
}

.sheet { flex: 1; display: flex; min-height: 0; background: #fff; margin-left: 1px; }
.grid { width: 1276px; flex: none; overflow: hidden; font-family: Lato, "Open Sans", sans-serif; font-size: 13.85px; color: #111; }
.line {
  display: grid;
  grid-template-columns: 34px 61px 61px 182px 1fr;
  height: 18px;
  box-sizing: border-box;
  border-bottom: 1px solid #c4c4c4;
}
.line.head { border-bottom: 0; height: 18px; }
.cell {
  box-sizing: border-box; border-right: 1px solid #c4c4c4; padding: 0 0 0 1px;
  white-space: pre; overflow: hidden; height: 18px; line-height: 15px;
}
.cell.last { border-right-color: #808080; }
.cell.wide { border-right: 0; padding-left: 1px; }
.cell.loose { letter-spacing: 0.115px; }
.cell.num { text-align: right; }
.rh {
  background: #f0f0f0; text-align: center; border-right-color: #777; line-height: 17px;
  font-family: "Open Sans", sans-serif; font-size: 11.5px; border-bottom: 1px solid #999; color: #222;
}
.ch {
  background: #f0f0f0; text-align: center; font-family: "Open Sans", sans-serif; font-size: 12px; line-height: 17px;
  border-right-color: #777; color: #222;
}
.ch-d {
  background: linear-gradient(to bottom, #5da8e4 0 10px, #0078d7 10px); line-height: 17px;
  text-align: center; color: #e8f4ff; font-family: "Open Sans", sans-serif; font-size: 12px; font-weight: 700;
  padding-left: 60px; overflow: hidden; box-sizing: border-box;
}
.bad { text-decoration: underline wavy #d9322c 1px; text-underline-offset: 1px; }

.vscroll { width: 17px; background: #f0f0f0; position: relative; display: flex; flex-direction: column; align-items: center; flex: none; }
.cap { position: absolute; left: 0; top: 0; width: 17px; height: 3px; background: #000; }
.v-up, .v-down { width: 7px; height: 7px; flex: none; border-left: 2px solid #555; border-top: 2px solid #555; box-sizing: border-box; transform: rotate(45deg); }
.v-up { margin-top: 9px; }
.v-thumb { width: 16px; height: 235px; background: #cdcdcd; margin-top: 3px; }
.v-down { margin-top: auto; margin-bottom: 7px; transform: rotate(225deg); }

.tabbar {
  height: 19px; flex: none; margin: 0 18px 0 1px; display: flex; align-items: stretch;
  border-top: 1px solid #808080; box-sizing: border-box; background: #f0f0f0; position: relative;
}
.tab-nav { display: flex; gap: 3px; padding: 2px 0 0 2px; width: 70px; box-sizing: border-box; flex: none; }
.nav {
  width: 14px; height: 14px; background: #d8d8d8; color: #f4f4f4; font-size: 8px; line-height: 14px;
  text-align: center; letter-spacing: -1px; overflow: hidden; flex: none;
}
.tab { position: relative; font-size: 11.5px; line-height: 16px; white-space: nowrap; color: #222; flex: none; }
.tab::before, .tab::after {
  content: ""; position: absolute; top: 0; bottom: 0; width: 1px; background: #666;
}
.tab.back { padding: 0 4px 0 9px; }
.tab.back::before { left: 2px; transform: skewX(18deg); }
.tab.back::after { right: -2px; transform: skewX(18deg); }
.tab.active { font-weight: 700; background: #fff; border-bottom: 1px solid #111; padding: 0 4px; margin-left: 5px; font-size: 11.2px; color: #111; }
.tab.active::before, .tab.active::after { display: none; }
.tab.fwd { margin-left: 4px; padding: 0 4px 0 6px; }
.tab.fwd::before { left: 0; transform: skewX(-18deg); }
.tab.fwd::after { right: -2px; transform: skewX(-18deg); }
.tab-fill { flex: 1; border-right: 1px solid #777; }
.split { width: 5px; background: #fff; border: 1px solid #999; border-width: 0 1px 1px 0; box-sizing: border-box; flex: none; }
.hscroll { width: 564px; display: flex; align-items: center; flex: none; }
.h-left, .h-right { width: 7px; height: 7px; border-left: 2px solid #555; border-bottom: 2px solid #555; box-sizing: border-box; transform: rotate(45deg); flex: none; }
.h-left { margin-left: 7px; }
.h-thumb { width: 198px; height: 15px; background: #cdcdcd; margin-left: 3px; flex: none; }
.h-right { margin-left: auto; margin-right: 7px; transform: rotate(225deg); }
.blackbar { width: 3px; background: #000; flex: none; }

.deck-split { width: 6px; flex: none; border-right: 1px solid #777; position: relative; background: #f6f6f6; }
.deck-split i { position: absolute; left: 1px; top: 271px; border: 3px solid transparent; border-left: 3px solid #444; }
.deck-split i.down { top: 302px; }
.deck-split b {
  position: absolute; left: 2px; top: 280px; width: 2px; height: 20px;
  background: repeating-linear-gradient(to bottom, #666 0 1px, transparent 1px 4px);
}
.deck {
  flex: 1; display: flex; flex-direction: column; align-items: center; padding-left: 2px;
  background: #f0f0f0; border-right: 1px solid #888; border-top: 1px solid #c0c0c0; margin-right: 2px;
}
.deck-menu { margin-top: 9px; }
.deck-rule { width: 26px; height: 1px; background: #dcdcdc; margin: 8px 0 3px; }
.deck-tab { width: 32px; height: 32px; display: flex; align-items: center; justify-content: center; margin-bottom: 3px; box-sizing: border-box; flex: none; }
.deck-tab.on { border: 1px solid #a0a0a0; border-radius: 4px; background: #f7f7f7; }
.big { width: 24px; height: 24px; }

.status {
  height: 21px; flex: none; display: flex; align-items: center; background: #f0f0f0; font-size: 11.5px;
  border-top: 1px solid #fff; box-sizing: border-box;
}
.st { height: 18px; line-height: 20px; box-sizing: border-box; border-left: 1px solid #aaa; flex: none; white-space: nowrap; color: #222; }
.s-sheet { width: 309px; border-left: 0; padding-left: 10px; }
.s-page { width: 418px; padding-left: 5px; font-size: 11.3px; }
.s-a { width: 54px; }
.s-std { width: 34px; padding-left: 4px; }
.s-b { width: 16px; }
.s-c { width: 29px; }
.s-sum { width: 288px; text-align: center; }
.s-zoom { width: 153px; display: flex; align-items: center; }
.s-pct { width: 38px; padding-left: 1px; }
.z-btn {
  width: 11px; height: 11px; border-radius: 50%; background: #dbe7f1; border: 1px solid #4f7ea8; flex: none;
  font-style: normal; font-size: 11px; line-height: 10px; text-align: center; color: #2d5a82; margin-left: 5px;
}
.z-track { width: 108px; height: 1px; background: #777; margin: 0 3px 0 4px; position: relative; flex: none; }
.z-track + .z-btn { margin-left: 0; }
.z-track b { position: absolute; left: 48px; top: -4px; width: 8px; height: 9px; border-radius: 50%; background: #5b87a8; border: 1px solid #3f6788; box-sizing: border-box; }

.strip { height: 14px; background: #f6f6f6; border-bottom: 1px solid #bdbdbd; box-sizing: border-box; position: relative; }
.strip-a { position: absolute; left: 230px; top: 0; width: 1px; height: 8px; background: #aaa; }
.strip-b { position: absolute; left: 1253px; top: 0; width: 77px; height: 2px; background: #7f9fb8; }

.taskbar { height: 40px; background: #000; display: flex; align-items: center; color: #fff; position: relative; }
.start { width: 48px; height: 100%; display: flex; align-items: center; justify-content: center; flex: none; }
.search { width: 344px; height: 100%; background: #f2f2f2; display: flex; align-items: center; flex: none; box-sizing: border-box; padding-left: 9px; }
.cortana { width: 21px; height: 21px; border: 3px solid #222; border-radius: 50%; box-sizing: border-box; flex: none; }
.search-text { margin-left: 10px; font-size: 14px; color: #444; }
.search-mic { margin-left: auto; margin-right: 10px; }
.dock {
  width: 49px; height: 100%; display: flex; align-items: center; justify-content: center; flex: none;
  position: relative; box-sizing: border-box;
}
.tb { width: 24px; height: 24px; }
.dock.run::after {
  content: ""; position: absolute; left: 4px; right: 4px; bottom: 0; height: 2px; background: #76b9ed;
}
.pdfapp { background: #1f1f1f; }
.pdfapp::after { left: 0 !important; right: 0 !important; }
.calcapp { background: #2c2c2c; }
.calcapp::after { left: 0 !important; right: 0 !important; }
.desk-label { margin-left: 81px; font-size: 12.5px; color: #ddd; }
.chevs { font-size: 13px; font-weight: 700; margin: 2px 0 0 4px; line-height: 1; align-self: flex-start; }
.people { margin-left: 20px; }
.caret { width: 12px; height: 7px; margin-left: 21px; flex: none; }
.clock { display: flex; flex-direction: column; align-items: center; width: 62px; margin-left: 7px; font-size: 11.5px; line-height: 19px; color: #eee; }
.notify { position: relative; margin-left: 11px; flex: none; }
.notify b {
  position: absolute; right: -6px; bottom: -5px; width: 15px; height: 15px; border-radius: 50%;
  background: #3a3a3a; color: #fff; font-size: 10px; line-height: 13px; text-align: center; border: 1px solid #777; box-sizing: border-box;
}
.show-desk { position: absolute; left: 1362px; top: 0; width: 1px; height: 100%; background: #555; }
</style>
